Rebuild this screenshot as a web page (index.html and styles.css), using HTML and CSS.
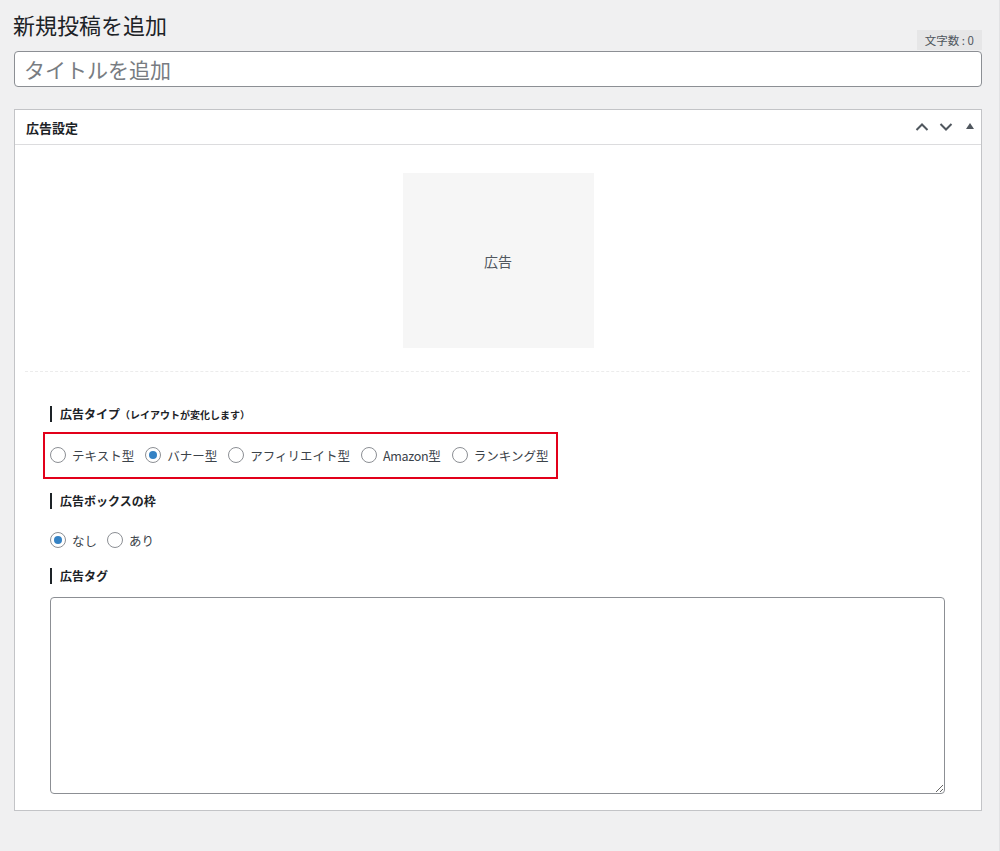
FILE: index.html
```html
<!DOCTYPE html>
<html lang="ja">
<head>
<meta charset="utf-8">
<title>新規投稿を追加</title>
<link rel="stylesheet" href="styles.css">
</head>
<body>
<div class="wrap">
  <div class="head-row">
    <h1 class="page-title">新規投稿を追加</h1>
    <span class="count-badge">文字数 : 0</span>
  </div>
  <div class="title-input">タイトルを追加</div>

  <div class="metabox">
    <div class="metabox-head">
      <h2 class="metabox-title">広告設定</h2>
      <div class="metabox-tools">
        <svg class="tool" width="14" height="10" viewBox="0 0 14 10"><path d="M1.5 8 L7 2.5 L12.5 8" fill="none" stroke="#50575e" stroke-width="2"/></svg>
        <svg class="tool" width="14" height="10" viewBox="0 0 14 10"><path d="M1.5 2 L7 7.5 L12.5 2" fill="none" stroke="#50575e" stroke-width="2"/></svg>
        <svg class="tool tri" width="8" height="6" viewBox="0 0 8 6"><path d="M0 6 L4 0 L8 6 Z" fill="#50575e"/></svg>
      </div>
    </div>
    <div class="metabox-body">
      <div class="preview-area">
        <div class="ad-preview">広告</div>
      </div>
      <div class="separator"></div>
      <div class="settings">
        <div class="field-label">広告タイプ<span class="sub">（レイアウトが変化します）</span></div>
        <div class="highlight">
          <div class="radio-row">
            <label class="radio"><span class="dot"></span>テキスト型</label>
            <label class="radio"><span class="dot checked"></span>バナー型</label>
            <label class="radio"><span class="dot"></span>アフィリエイト型</label>
            <label class="radio"><span class="dot"></span><span class="latin">Amazon</span>型</label>
            <label class="radio"><span class="dot"></span>ランキング型</label>
          </div>
        </div>
        <div class="field-label second">広告ボックスの枠</div>
        <div class="radio-row plain">
          <label class="radio"><span class="dot checked"></span>なし</label>
          <label class="radio"><span class="dot"></span>あり</label>
        </div>
        <div class="field-label third">広告タグ</div>
        <textarea class="tag-area"></textarea>
      </div>
    </div>
  </div>
</div>
</body>
</html>
```

FILE: styles.css
```css
html, body {
  margin: 0;
  padding: 0;
}
body {
  background: #f0f0f1;
  font-family: "Noto Sans CJK JP", "Noto Sans", sans-serif;
  color: #1d2327;
  width: 1000px;
  height: 851px;
  overflow: hidden;
}
.wrap {
  padding: 0 17px 0 14px;
  border-right: 1px solid #e2e2e4;
  width: 968px;
  height: 851px;
  box-sizing: content-box;
}
.head-row {
  height: 51px;
  display: flex;
  justify-content: space-between;
}
.page-title {
  margin: 9px 0 0 -1px;
  font-size: 22px;
  line-height: 30px;
  font-weight: 400;
  color: #1d2327;
  align-self: flex-start;
}
.count-badge {
  align-self: flex-end;
  margin-bottom: 1px;
  height: 20px;
  line-height: 20px;
  padding: 0 8px 0 8px;
  background: #e6e6e7;
  color: #50575e;
  font-size: 11.5px;
  box-sizing: border-box;
}
.title-input {
  height: 36px;
  box-sizing: border-box;
  border: 1px solid #8c8f94;
  border-radius: 4px;
  background: #fff;
  padding: 0 9px;
  font-size: 21px;
  line-height: 34px;
  color: #787c82;
}
.metabox {
  margin-top: 22px;
  background: #fff;
  border: 1px solid #c3c4c7;
  height: 702px;
  box-sizing: border-box;
}
.metabox-head {
  height: 35px;
  box-sizing: border-box;
  border-bottom: 1px solid #dcdcde;
  display: flex;
  align-items: center;
  justify-content: space-between;
  padding: 0 7px 0 11px;
}
.metabox-title {
  margin: 0;
  font-size: 13px;
  font-weight: 700;
  color: #1d2327;
}
.metabox-tools {
  display: flex;
  align-items: center;
  gap: 10px;
}
.tool.tri {
  margin-left: 3px;
  margin-bottom: 3px;
}
.metabox-body {
  padding: 28px 10px 0 10px;
}
.preview-area {
  display: flex;
  justify-content: center;
}
.ad-preview {
  width: 191px;
  height: 175px;
  background: #f6f6f6;
  display: flex;
  align-items: center;
  justify-content: center;
  font-size: 14px;
  color: #50575e;
}
.separator {
  margin: 23px 1px 0 0;
  border-top: 1px dashed #ececec;
}
.settings {
  padding: 34px 26px 0 25px;
}
.field-label {
  border-left: 2px solid #1d2327;
  padding-left: 8px;
  height: 16px;
  line-height: 16px;
  font-size: 12px;
  font-weight: 700;
  color: #1d2327;
}
.field-label .sub {
  font-size: 10px;
}
.highlight {
  margin: 10px 0 0 -7px;
  display: inline-block;
  border: 2px solid #e2001a;
  padding: 13px 7px 14px 5px;
}
.radio-row {
  display: flex;
  align-items: center;
  height: 16px;
}
.radio {
  display: flex;
  align-items: center;
  font-size: 12.5px;
  color: #3c434a;
  margin-right: 11px;
  white-space: nowrap;
}
.radio .latin {
  letter-spacing: -0.3px;
}
.radio:last-child {
  margin-right: 0;
}
.dot {
  width: 16px;
  height: 16px;
  box-sizing: border-box;
  border: 1px solid #8c8f94;
  border-radius: 50%;
  background: #fff;
  margin-right: 6px;
  display: flex;
  align-items: center;
  justify-content: center;
}
.dot.checked::before {
  content: "";
  width: 8px;
  height: 8px;
  border-radius: 50%;
  background: #3582c4;
}
.field-label.second {
  margin-top: 14px;
}
.radio-row.plain {
  margin-top: 23px;
}
.radio-row.plain .radio {
  margin-right: 10px;
}
.field-label.third {
  margin-top: 20px;
}
.tag-area {
  display: block;
  margin-top: 13px;
  width: 100%;
  height: 197px;
  box-sizing: border-box;
  border: 1px solid #8c8f94;
  border-radius: 4px;
  background: #fff;
  resize: both;
  font-family: inherit;
}
```
